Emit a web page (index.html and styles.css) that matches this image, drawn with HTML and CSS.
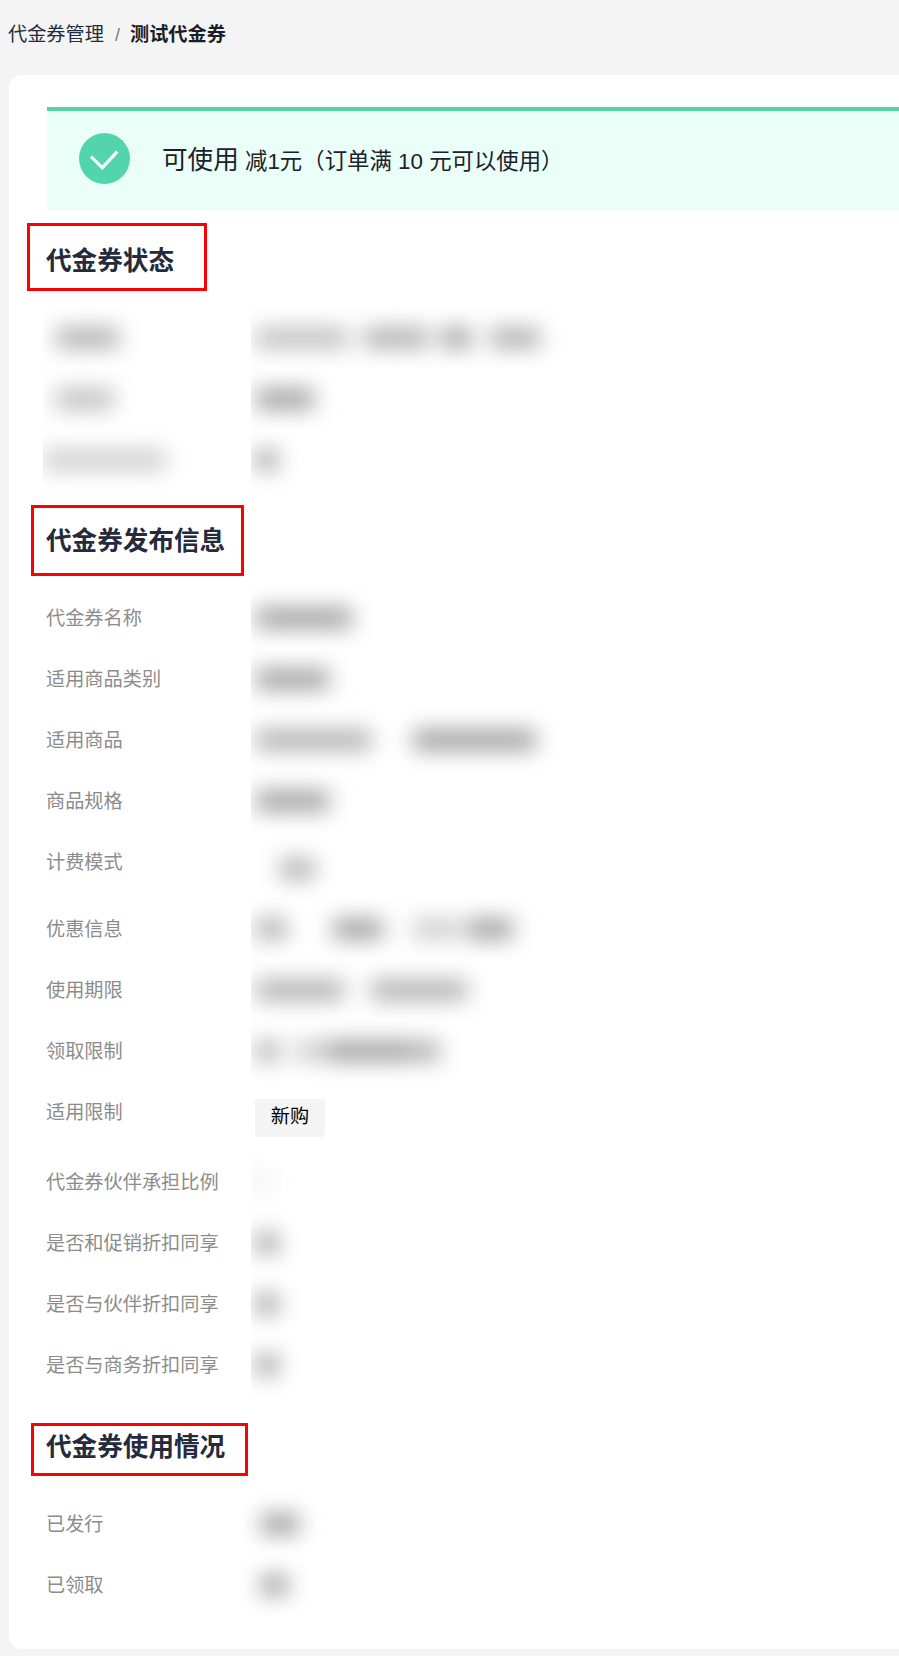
FILE: index.html
```html
<!DOCTYPE html>
<html lang="zh-CN">
<head>
<meta charset="utf-8">
<title>测试代金券</title>
<link rel="stylesheet" href="styles.css">
</head>
<body>
<nav class="crumbs"><span>代金券管理</span><span class="sep">/</span><strong>测试代金券</strong></nav>
<main class="card">
  <div class="alert">
    <svg class="alert-icon" viewBox="0 0 51 51" aria-hidden="true"><circle cx="25.5" cy="25.5" r="25.5" fill="#53d5ab"/><path d="M12 23.7 23.3 34.7 38.3 18.7" fill="none" stroke="#fff" stroke-width="3.2"/></svg>
    <p class="alert-text"><span class="alert-state">可使用</span> 减1元（订单满 10 元可以使用）</p>
  </div>

  <h2 class="title">代金券状态<span class="mark mark-a"></span></h2>
  <div class="row">
    <div class="cell cell-label"><div class="blur"><i class="b mid" style="margin-left:13px;width:63px"></i></div></div>
    <div class="cell cell-value"><div class="blur"><i class="b light" style="width:92px"></i><i class="b mid" style="margin-left:16px;width:65px"></i><i class="b dark" style="margin-left:13px;width:29px"></i><i class="b mid" style="margin-left:19px;width:50px"></i></div></div>
  </div>
  <div class="row">
    <div class="cell cell-label"><div class="blur"><i class="b light" style="margin-left:13px;width:58px"></i></div></div>
    <div class="cell cell-value"><div class="blur"><i class="b dark" style="width:58px"></i></div></div>
  </div>
  <div class="row">
    <div class="cell cell-label"><div class="blur"><i class="b faint" style="width:123px"></i></div></div>
    <div class="cell cell-value"><div class="blur"><i class="b dark" style="width:21px"></i></div></div>
  </div>

  <h2 class="title">代金券发布信息<span class="mark mark-b"></span></h2>
  <div class="row"><span class="label">代金券名称</span><div class="cell cell-value"><div class="blur"><i class="b dark" style="width:96px"></i></div></div></div>
  <div class="row"><span class="label">适用商品类别</span><div class="cell cell-value"><div class="blur"><i class="b dark" style="width:73px"></i></div></div></div>
  <div class="row"><span class="label">适用商品</span><div class="cell cell-value"><div class="blur"><i class="b mid" style="width:115px"></i><i class="b dark" style="margin-left:42px;width:123px"></i></div></div></div>
  <div class="row"><span class="label">商品规格</span><div class="cell cell-value"><div class="blur"><i class="b dark" style="width:73px"></i></div></div></div>
  <div class="row row-tall"><span class="label">计费模式</span><div class="cell cell-value cell-low"><div class="blur"><i class="b mid" style="margin-left:24px;width:35px"></i></div></div></div>
  <div class="row"><span class="label">优惠信息</span><div class="cell cell-value"><div class="blur"><i class="b mid" style="width:31px"></i><i class="b dark" style="margin-left:46px;width:50px"></i><i class="b faint" style="margin-left:30px;width:46px"></i><i class="b dark" style="margin-left:8px;width:46px"></i></div></div></div>
  <div class="row"><span class="label">使用期限</span><div class="cell cell-value"><div class="blur"><i class="b mid" style="width:88px"></i><i class="b mid" style="margin-left:27px;width:96px"></i></div></div></div>
  <div class="row"><span class="label">领取限制</span><div class="cell cell-value"><div class="blur"><i class="b mid" style="width:23px"></i><i class="b faint" style="margin-left:16px;width:34px"></i><i class="b dark" style="width:77px"></i><i class="b mid" style="width:34px"></i></div></div></div>
  <div class="row row-tag"><span class="label">适用限制</span><div class="tags"><span class="tag">新购</span></div></div>
  <div class="row"><span class="label">代金券伙伴承担比例</span><div class="cell cell-value"><div class="blur"><i class="b ghost" style="width:12px"></i></div></div></div>
  <div class="row"><span class="label">是否和促销折扣同享</span><div class="cell cell-value"><div class="blur"><i class="b dark" style="width:22px"></i></div></div></div>
  <div class="row"><span class="label">是否与伙伴折扣同享</span><div class="cell cell-value"><div class="blur"><i class="b dark" style="width:22px"></i></div></div></div>
  <div class="row"><span class="label">是否与商务折扣同享</span><div class="cell cell-value"><div class="blur"><i class="b dark" style="width:22px"></i></div></div></div>

  <h2 class="title title-last">代金券使用情况<span class="mark mark-c"></span></h2>
  <div class="row"><span class="label">已发行</span><div class="cell cell-value cell-wide"><div class="blur"><i class="b dark" style="margin-left:5px;width:38px"></i></div></div></div>
  <div class="row"><span class="label">已领取</span><div class="cell cell-value cell-wide"><div class="blur"><i class="b dark" style="margin-left:5px;width:27px"></i></div></div></div>
</main>
</body>
</html>
```
FILE: styles.css
```css
* { box-sizing: border-box; }
html, body { margin: 0; padding: 0; }
body {
  background: #f4f4f4;
  color: #252b3a;
  font-family: "Liberation Sans", "Noto Sans CJK SC", sans-serif;
  font-size: 19.2px;
  overflow-x: hidden;
}
.crumbs {
  display: flex;
  align-items: center;
  height: 75px;
  padding: 0 0 5px 8px;
  line-height: 28px;
}
.crumbs .sep { margin: 0 10px 0 11px; color: #777b85; font-size: 18px; }
.crumbs strong { font-weight: 700; color: #1a1e29; }

.card {
  margin: 0 0 8px 9px;
  padding: 32px 0 34px 38px;
  background: #fff;
  border-radius: 13px 0 0 13px;
}
.alert {
  display: flex;
  align-items: center;
  gap: 32px;
  height: 103px;
  padding: 0 0 4px 32px;
  background: #e9fff8;
  border-top: 4px solid #53d5ab;
}
.alert-icon { display: block; width: 51px; height: 51px; flex: none; }
.alert-text { margin: 0; padding-top: 4px; font-size: 22.4px; line-height: 34px; color: #1d2129; }
.alert-state { font-size: 25.6px; }

.title {
  position: relative;
  height: 40px;
  margin: 30px 0 27px;
  padding-top: 1px;
  text-indent: -1px;
  font-size: 25.6px;
  font-weight: 700;
  line-height: 40px;
}
.title-last { margin-top: 31px; }
.mark { position: absolute; border: 3px solid #f00; }
.mark-a { left: -20px; top: -17px; width: 180px; height: 68px; }
.mark-b { left: -16px; top: -15px; width: 213px; height: 71px; }
.mark-c { left: -16px; top: -3px; width: 217px; height: 53px; }

.row { display: flex; align-items: flex-start; height: 61px; }
.row-tall { height: 67px; }
.row-tag { height: 70px; }
.label {
  flex: none;
  width: 208px;
  padding-top: 1px;
  text-indent: -1px;
  color: #8c8c8c;
  line-height: 61px;
}
.cell { height: 61px; overflow: hidden; }
.cell-label { flex: none; width: 208px; margin-left: -4px; }
.cell-value { flex: none; width: 340px; margin-left: -4px; padding-left: 5px; }
.cell-label + .cell-value { margin-left: 0; }
.cell-low { height: 68px; padding-top: 7px; }
.cell-wide { margin-left: -15px; padding-left: 16px; }
.blur {
  display: flex;
  align-items: center;
  height: 61px;
  filter: blur(11px);
}
.b { display: block; flex: none; height: 20px; }
.dark { background: #9c9c9c; }
.mid { background: #adadad; }
.light { background: #bcbcbc; }
.faint { background: #cbcbcb; }
.ghost { background: #e6e6e6; }

.tags { display: flex; margin-top: 18px; }
.tag {
  width: 70px;
  height: 38px;
  background: #f4f4f4;
  border-radius: 3px;
  color: #000;
  line-height: 36px;
  text-align: center;
}
```
